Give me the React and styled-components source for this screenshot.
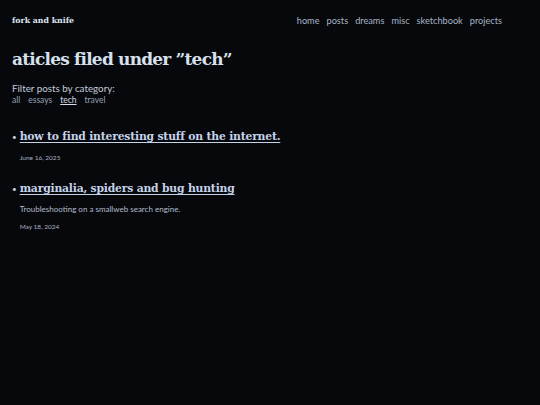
import React from 'react';
import styled, { createGlobalStyle } from 'styled-components';

const GlobalStyle = createGlobalStyle`
  html, body {
    margin: 0;
    padding: 0;
    background: #06080c;
  }
  body {
    font-family: Lato, "Open Sans", sans-serif;
    color: #c8d2e0;
  }
`;

const slab = `"DejaVu Serif", "Liberation Serif", serif`;

const Page = styled.div`
  width: 540px;
  min-height: 405px;
  padding: 0 38px 0 12px;
  box-sizing: border-box;
`;

const Header = styled.header`
  display: flex;
  justify-content: space-between;
  align-items: center;
  height: 40px;
`;

const Logo = styled.a`
  font-family: ${slab};
  font-weight: bold;
  font-size: 7.8px;
  color: #dfe6ef;
  text-decoration: none;
`;

const Nav = styled.nav`
  display: flex;
  gap: 7px;
`;

const NavLink = styled.a`
  font-size: 9.2px;
  color: #a7b3c6;
  text-decoration: none;
`;

const Title = styled.h1`
  font-family: ${slab};
  font-weight: bold;
  font-size: 17px;
  letter-spacing: -0.8px;
  color: #d7e0ec;
  margin: 9px 0 13px;
`;

const FilterLabel = styled.div`
  font-size: 9.8px;
  color: #c4ccd8;
`;

const Tags = styled.div`
  display: flex;
  gap: 8px;
  margin-top: 1px;
`;

const Tag = styled.a`
  font-size: 8.5px;
  color: ${p => (p.$active ? '#d2dcea' : '#96a2b4')};
  text-decoration: ${p => (p.$active ? 'underline' : 'none')};
`;

const PostList = styled.ul`
  list-style: none;
  margin: 22px 0 0;
  padding: 0;
`;

const Post = styled.li`
  display: flex;
  gap: 3px;
  margin-bottom: 18px;
`;

const Bullet = styled.span`
  font-size: 8px;
  line-height: 20px;
  color: #c8d2e0;
`;

const PostBody = styled.div`
  display: flex;
  flex-direction: column;
`;

const PostTitle = styled.a`
  font-family: ${slab};
  font-weight: bold;
  font-size: 10.8px;
  letter-spacing: -0.2px;
  line-height: 20px;
  color: #c5d3e8;
  text-decoration: underline;
  text-underline-offset: 2px;
`;

const Summary = styled.p`
  font-size: 8px;
  color: #b3bccb;
  margin: 5px 0 0;
`;

const PostDate = styled.span`
  font-size: 6.5px;
  color: #a9b2c0;
  margin-top: ${p => (p.$spaced ? '7px' : '9px')};
`;

const navItems = ['home', 'posts', 'dreams', 'misc', 'sketchbook', 'projects'];
const categories = ['all', 'essays', 'tech', 'travel'];

const posts = [
  { title: 'how to find interesting stuff on the internet.', date: 'June 16, 2025' },
  {
    title: 'marginalia, spiders and bug hunting',
    summary: 'Troubleshooting on a smallweb search engine.',
    date: 'May 18, 2024',
  },
];

export default function App() {
  return (
    <Page>
      <GlobalStyle />
      <Header>
        <Logo href="#">fork and knife</Logo>
        <Nav>
          {navItems.map(item => (
            <NavLink key={item} href="#">{item}</NavLink>
          ))}
        </Nav>
      </Header>
      <Title>aticles filed under ”tech”</Title>
      <FilterLabel>Filter posts by category:</FilterLabel>
      <Tags>
        {categories.map(c => (
          <Tag key={c} href="#" $active={c === 'tech'}>{c}</Tag>
        ))}
      </Tags>
      <PostList>
        {posts.map(p => (
          <Post key={p.title}>
            <Bullet>•</Bullet>
            <PostBody>
              <PostTitle href="#">{p.title}</PostTitle>
              {p.summary && <Summary>{p.summary}</Summary>}
              <PostDate $spaced={!p.summary}>{p.date}</PostDate>
            </PostBody>
          </Post>
        ))}
      </PostList>
    </Page>
  );
}
